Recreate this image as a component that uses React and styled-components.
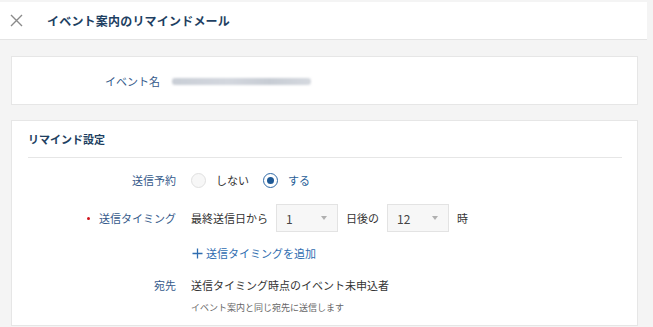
import React from "react";
import styled, { createGlobalStyle } from "styled-components";

const GlobalStyle = createGlobalStyle`
  body {
    margin: 0;
    background: #f4f4f4;
    font-family: "Noto Sans CJK JP", "Noto Sans", sans-serif;
    color: #333;
  }
`;

const Page = styled.div`
  width: 647px;
  padding-top: 2px;
`;

const Header = styled.header`
  height: 37px;
  background: #fff;
  border-bottom: 1px solid #e4e4e4;
  display: flex;
  align-items: center;
  padding-left: 10px;
`;

const CloseButton = styled.span`
  width: 13px;
  height: 13px;
  display: flex;
  margin-right: 24px;
`;

const Title = styled.h1`
  margin: 0;
  font-size: 12px;
  font-weight: 700;
  color: #1e3f62;
  letter-spacing: 0.2px;
`;

const Content = styled.main`
  padding: 16px 9px 0 11px;
  display: flex;
  flex-direction: column;
  gap: 15px;
`;

const Card = styled.section`
  background: #fff;
  border: 1px solid #e6e6e6;
  padding: ${(p) => p.$pad || "0"};
  height: ${(p) => p.$h || "auto"};
  box-sizing: border-box;
`;

const NameRow = styled.div`
  display: grid;
  grid-template-columns: 148px 1fr;
  column-gap: 12px;
  align-items: center;
  height: 47px;
`;

const Label = styled.div`
  font-size: 11px;
  color: #34598a;
  text-align: right;
  display: flex;
  align-items: center;
  justify-content: flex-end;
  line-height: 20px;
`;

const Blurred = styled.span`
  display: block;
  width: 139px;
  height: 7px;
  margin-top: 2px;
  border-radius: 3px;
  background: linear-gradient(90deg, #c9ced6 0%, #d3d7de 40%, #c7ccd4 70%, #d5d9df 100%);
  filter: blur(1.3px);
`;

const SectionTitle = styled.h2`
  margin: 0;
  height: 36px;
  display: flex;
  align-items: center;
  font-size: 11px;
  font-weight: 700;
  color: #1e3f62;
  border-bottom: 1px solid #e6e6e6;
`;

const Row = styled.div`
  display: grid;
  grid-template-columns: 148px 1fr;
  column-gap: 15px;
  align-items: ${(p) => p.$align || "center"};
  min-height: ${(p) => p.$h || 20}px;
  margin-top: ${(p) => p.$mt || 0}px;
`;

const Dot = styled.span`
  width: 3px;
  height: 3px;
  border-radius: 50%;
  background: #d0141c;
  margin-right: 9px;
`;

const Inline = styled.div`
  display: flex;
  align-items: center;
  font-size: 11px;
  color: #333;
`;

const Radio = styled.span`
  width: 15px;
  height: 15px;
  box-sizing: border-box;
  border-radius: 50%;
  border: 1px solid ${(p) => (p.$on ? "#2f69a6" : "#e0e0e0")};
  background: ${(p) => (p.$on ? "#fff" : "#f7f7f7")};
  display: flex;
  align-items: center;
  justify-content: center;
  margin-right: 10px;
  &::after {
    content: "";
    display: ${(p) => (p.$on ? "block" : "none")};
    width: 7px;
    height: 7px;
    border-radius: 50%;
    background: #1e5996;
  }
`;

const RadioText = styled.span`
  color: ${(p) => (p.$on ? "#2a5f98" : "#333")};
  margin-right: ${(p) => p.$mr || 0}px;
`;

const Select = styled.div`
  width: 62px;
  height: 28px;
  box-sizing: border-box;
  background: #f7f7f7;
  border: 1px solid #e3e3e3;
  display: flex;
  align-items: center;
  justify-content: space-between;
  padding: 0 9px;
  margin: 0 8px;
  font-size: 12px;
  color: #444;
  &::after {
    content: "";
    border-left: 3.5px solid transparent;
    border-right: 3.5px solid transparent;
    border-top: 4px solid #b0b0b0;
    margin-right: 1px;
  }
`;

const AddLink = styled.a`
  display: flex;
  align-items: center;
  gap: 3px;
  font-size: 11px;
  color: #2f6db0;
  text-decoration: none;
  margin-left: 1px;
`;

const Recipient = styled.div`
  font-size: 11px;
  color: #333;
  line-height: 20px;
`;

const Note = styled.div`
  font-size: 9px;
  color: #666;
  margin-top: 6px;
`;

export default function App() {
  return (
    <Page>
      <GlobalStyle />
      <Header>
        <CloseButton>
          <svg width="13" height="13" viewBox="0 0 13 13">
            <path d="M1 1L12 12M12 1L1 12" stroke="#8a8a8a" strokeWidth="1.4" />
          </svg>
        </CloseButton>
        <Title>イベント案内のリマインドメール</Title>
      </Header>

      <Content>
        <Card>
          <NameRow>
            <Label>イベント名</Label>
            <Blurred />
          </NameRow>
        </Card>

        <Card $pad="0 15px 0 16px" $h="206px">
          <SectionTitle>リマインド設定</SectionTitle>

          <Row $h={28} $mt={8}>
            <Label>送信予約</Label>
            <Inline>
              <Radio />
              <RadioText $mr={14}>しない</RadioText>
              <Radio $on />
              <RadioText $on>する</RadioText>
            </Inline>
          </Row>

          <Row $h={28} $mt={10}>
            <Label>
              <Dot />
              送信タイミング
            </Label>
            <Inline>
              最終送信日から
              <Select>1</Select>
              日後の
              <Select>12</Select>
              時
            </Inline>
          </Row>

          <Row $h={20} $mt={11}>
            <span />
            <AddLink href="#">
              <svg width="11" height="11" viewBox="0 0 11 11">
                <path d="M5.5 0.5V10.5M0.5 5.5H10.5" stroke="#2f6db0" strokeWidth="1.3" />
              </svg>
              送信タイミングを追加
            </AddLink>
          </Row>

          <Row $h={20} $mt={12} $align="start">
            <Label>宛先</Label>
            <div>
              <Recipient>送信タイミング時点のイベント未申込者</Recipient>
              <Note>イベント案内と同じ宛先に送信します</Note>
            </div>
          </Row>
        </Card>
      </Content>
    </Page>
  );
}
